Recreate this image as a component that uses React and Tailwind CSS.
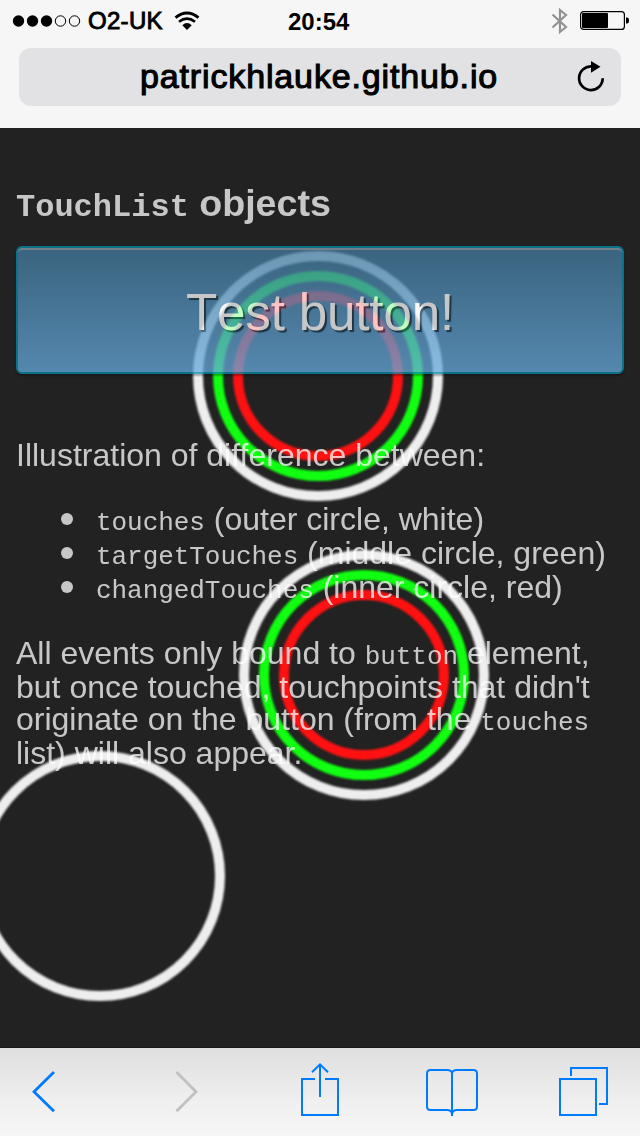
const rings = [
  { cx: 318, cy: 248, full: true },
  { cx: 364, cy: 547, full: true },
  { cx: 100, cy: 748, full: false },
];

function Code({ children }) {
  return <code className="font-['Liberation_Mono',monospace] text-[26px] leading-none tracking-[-0.05px]">{children}</code>;
}

function StatusBar() {
  return (
    <div className="flex h-10 items-center pt-px">
      <svg className="ml-3 block" width="70" height="14" viewBox="0 0 70 14">
        {[6.5, 20.5, 34.5].map((x) => (
          <circle key={x} cx={x} cy="7" r="5.7" fill="#000" />
        ))}
        {[48.5, 62.5].map((x) => (
          <circle key={x} cx={x} cy="7" r="5.2" fill="none" stroke="#000" />
        ))}
      </svg>
      <span className="ml-[6px] w-[76px] text-[24px] leading-none tracking-[0.3px] whitespace-nowrap [-webkit-text-stroke:0.9px_#000]">O2-UK</span>
      <svg className="ml-[10px] block" width="26" height="20" viewBox="0 0 26 20">
        <path d="M1.5 6.7 Q13 -2.7 24.5 6.7" fill="none" stroke="#000" strokeWidth="2.8" />
        <path d="M5 10.8 Q13 4.6 21 10.8" fill="none" stroke="#000" strokeWidth="2.6" />
        <path d="M8.3 14.2 Q13 10 17.7 14.2 L13 19 Z" fill="#000" />
      </svg>
      <span className="ml-[88px] w-[64px] pt-[2px] text-[24px] leading-none font-bold whitespace-nowrap">20:54</span>
      <svg className="ml-[199px] block" width="18" height="28" viewBox="0 0 18 28">
        <path d="M1.5 7.5 L15 20 L9 25 V3 L15 8 L1.5 20.5" fill="none" stroke="#929292" strokeWidth="2.2" />
      </svg>
      <svg className="ml-[11px] block" width="49" height="20" viewBox="0 0 49 20">
        <rect x="0.6" y="0.6" width="43.8" height="17.8" rx="3" fill="none" stroke="#000" strokeWidth="1.2" />
        <rect x="2" y="2" width="26" height="15" rx="1" fill="#000" />
        <path d="M46 6.5 H47 Q49 6.5 49 9.5 Q49 12.5 47 12.5 H46 Z" fill="#000" />
      </svg>
    </div>
  );
}

function AddressBar() {
  return (
    <div className="mx-[19px] mt-2 flex h-[58px] items-center rounded-[12px] bg-[#e2e2e4]">
      <span className="ml-[121px] w-[360px] pb-[2px] text-[34px] leading-none tracking-[0.86px] whitespace-nowrap [-webkit-text-stroke:1.1px_#000]">
        patrickhlauke.github.io
      </span>
      <svg className="ml-[76px] block" width="30" height="34" viewBox="0 0 30 34">
        <path d="M16 6.5 A11.8 11.8 0 1 0 26.7 18.2" fill="none" stroke="#000" strokeWidth="2.7" />
        <path d="M15 1 L24.5 6.7 L15 12.8 Z" fill="#000" />
      </svg>
    </div>
  );
}

function Touchpoints() {
  return (
    <svg className="absolute top-0 -left-10 max-w-none blur-[0.9px]" width="720" height="920" viewBox="-40 0 720 920" fill="none" strokeWidth="10">
      {rings.map(({ cx, cy, full }) => (
        <g key={cx}>
          <circle cx={cx} cy={cy} r="120" stroke="#eee" />
          {full && <circle cx={cx} cy={cy} r="100" stroke="#11ff11" />}
          {full && <circle cx={cx} cy={cy} r="80" stroke="#ff1111" />}
        </g>
      ))}
    </svg>
  );
}

function Bullet({ name, children }) {
  return (
    <li className="flex h-[34px] items-center whitespace-nowrap">
      <span className="mr-[23px] h-3 w-3 rounded-full bg-white" />
      <span className="leading-[34px]">
        <Code>{name}</Code> {children}
      </span>
    </li>
  );
}

function Toolbar() {
  return (
    <nav className="flex h-[88px] items-start bg-linear-to-b from-[#dfdfdf] via-[#efefef] via-60% to-[#f6f6f6] pt-3">
      <svg className="ml-[30px] block" width="28" height="60" viewBox="30 1060 28 60" fill="none" stroke="#007aff" strokeWidth="2.8">
        <path d="M54 1072 L34 1091.7 L54 1111.3" />
      </svg>
      <svg className="ml-[114px] block" width="30" height="60" viewBox="172 1060 30 60" fill="none" stroke="#c0c0c0" strokeWidth="2.8">
        <path d="M176.5 1072 L196 1091.7 L176.5 1111.3" />
      </svg>
      <svg className="ml-[96px] block" width="44" height="60" viewBox="298 1060 44 60" fill="none" stroke="#007aff" strokeWidth="2">
        <path d="M315 1079 H302 V1115 H338 V1079 H325 M320 1097 V1064.5 M312 1072.3 L320 1064.3 L328 1072.3" />
      </svg>
      <svg className="ml-[82px] block" width="56" height="60" viewBox="424 1060 56 60" fill="none" stroke="#007aff" strokeWidth="2">
        <path d="M452 1116 V1073 Q451.5 1070 447 1070 H430.5 Q427 1070 427 1073.5 V1106.5 Q427 1110 430.5 1110 H447 Q451.5 1110 452 1114 Q452.5 1110 457 1110 H473.5 Q477 1110 477 1106.5 V1073.5 Q477 1070 473.5 1070 H457 Q452.5 1070 452 1073" />
      </svg>
      <svg className="ml-[76px] block" width="54" height="60" viewBox="556 1060 54 60" fill="none" stroke="#007aff" strokeWidth="2">
        <path d="M560 1079 H596 V1115 H560 Z M571 1076 V1068 H607 V1104 H599" />
      </svg>
    </nav>
  );
}

export default function App() {
  return (
    <div className="flex h-[1136px] w-[640px] flex-col overflow-hidden bg-[#f6f6f6] font-['Liberation_Sans',Arial,sans-serif] text-black">
      <header className="h-32 shrink-0">
        <StatusBar />
        <AddressBar />
      </header>
      <main className="relative h-[920px] shrink-0 overflow-hidden border-b border-[#181818] bg-[#222]">
        <Touchpoints />
        <div className="relative px-4 pt-[53px] text-[32px] text-white opacity-75">
          <h3 className="h-11 text-[37.6px] leading-[44px] font-bold whitespace-nowrap">
            <code className="font-['Liberation_Mono',monospace] text-[32px] leading-none">TouchList</code> objects
          </h3>
          <button className="mt-[21px] block h-32 w-full rounded-[6px] border-2 border-[#048daa] bg-linear-to-b from-[#427a9f] to-[#66aadd] pt-1.5 text-[51.2px] leading-none tracking-[-0.2px] shadow-[inset_0_2px_0_#8c9faa,0_2px_2px_rgba(0,0,0,0.4)] [font-kerning:none] [text-shadow:2px_2px_1px_#1b3a50]">
            Test button!
          </button>
          <p className="mt-16 leading-[34px] whitespace-nowrap">Illustration of difference between:</p>
          <ul className="mt-[30px] pl-[45px]">
            <Bullet name="touches">(outer circle, white)</Bullet>
            <Bullet name="targetTouches">(middle circle, green)</Bullet>
            <Bullet name="changedTouches">(inner circle, red)</Bullet>
          </ul>
          <div className="mt-8 whitespace-nowrap">
            <p className="h-[34px] leading-[34px]">
              All events only bound to <Code>button</Code> element,
            </p>
            <p className="h-8 leading-[34px]">but once touched, touchpoints that didn't</p>
            <p className="h-[34px] leading-[34px]">
              originate on the button (from the <Code>touches</Code>
            </p>
            <p className="h-[34px] leading-[34px]">list) will also appear.</p>
          </div>
        </div>
      </main>
      <Toolbar />
    </div>
  );
}
